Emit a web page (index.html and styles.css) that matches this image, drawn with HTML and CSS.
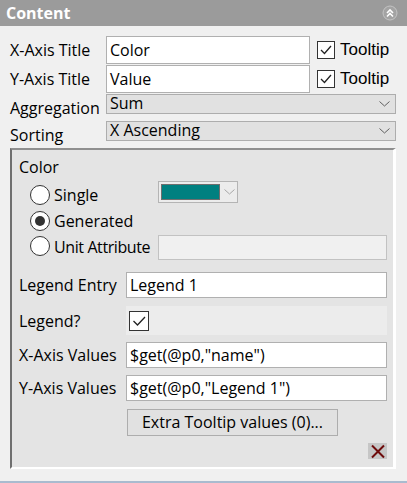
FILE: index.html
```html
<!DOCTYPE html>
<html>
<head>
<meta charset="utf-8">
<link rel="stylesheet" href="styles.css">
</head>
<body>
<div class="panel">
  <div class="header">
    <span class="title">Content</span>
    <svg class="collapse" width="16" height="16" viewBox="0 0 16 16">
      <circle cx="8" cy="8" r="7" fill="#a3a3a3" stroke="#c4c4c4" stroke-width="1"/>
      <polyline points="5,8 8,5 11,8" fill="none" stroke="#fff" stroke-width="1.6"/>
      <polyline points="5,11.5 8,8.5 11,11.5" fill="none" stroke="#fff" stroke-width="1.6"/>
    </svg>
  </div>
  <div class="content">
    <div class="row r1">
      <span class="lbl">X-Axis Title</span>
      <div class="input short">Color</div>
      <div class="chk-wrap">
        <span class="chk"><svg width="16" height="16" viewBox="0 0 16 16"><polyline points="3,8 6.5,11.5 13,4" fill="none" stroke="#222" stroke-width="1.3"/></svg></span>
        <span class="chk-lbl">Tooltip</span>
      </div>
    </div>
    <div class="row r2">
      <span class="lbl">Y-Axis Title</span>
      <div class="input short">Value</div>
      <div class="chk-wrap">
        <span class="chk"><svg width="16" height="16" viewBox="0 0 16 16"><polyline points="3,8 6.5,11.5 13,4" fill="none" stroke="#222" stroke-width="1.3"/></svg></span>
        <span class="chk-lbl">Tooltip</span>
      </div>
    </div>
    <div class="row sel-row r3">
      <span class="lbl low">Aggregation</span>
      <div class="select"><span class="sel-text">Sum</span>
        <svg class="chev" width="11" height="6" viewBox="0 0 11 6"><polyline points="0.5,0.5 5.5,5 10.5,0.5" fill="none" stroke="#606060" stroke-width="1"/></svg>
      </div>
    </div>
    <div class="row sel-row r4">
      <span class="lbl low">Sorting</span>
      <div class="select"><span class="sel-text">X Ascending</span>
        <svg class="chev" width="11" height="6" viewBox="0 0 11 6"><polyline points="0.5,0.5 5.5,5 10.5,0.5" fill="none" stroke="#606060" stroke-width="1"/></svg>
      </div>
    </div>

    <div class="group">
      <div class="grp-title">Color</div>
      <div class="radio-row rr1">
        <div class="radio-opt"><span class="radio"></span><span class="radio-lbl">Single</span></div>
        <div class="combo">
          <span class="swatch"></span>
          <svg class="combo-chev" width="11" height="6" viewBox="0 0 11 6"><polyline points="0.5,0.5 5.5,5 10.5,0.5" fill="none" stroke="#a8a8a8" stroke-width="1"/></svg>
        </div>
      </div>
      <div class="radio-row rr2">
        <div class="radio-opt"><span class="radio on"><span class="dot"></span></span><span class="radio-lbl">Generated</span></div>
      </div>
      <div class="radio-row rr3">
        <div class="radio-opt"><span class="radio up"></span><span class="radio-lbl tight">Unit Attribute</span></div>
        <div class="input disabled wide"></div>
      </div>

      <div class="frow f1">
        <span class="flbl">Legend Entry</span>
        <div class="input field">Legend 1</div>
      </div>
      <div class="frow f2">
        <span class="flbl">Legend?</span>
        <div class="legend-box">
          <span class="chk big"><svg width="18" height="18" viewBox="0 0 18 18"><polyline points="3.5,9 7.5,13 15,5" fill="none" stroke="#222" stroke-width="1.3"/></svg></span>
        </div>
      </div>
      <div class="frow f3">
        <span class="flbl">X-Axis Values</span>
        <div class="input field">$get(@p0,"name")</div>
      </div>
      <div class="frow f4">
        <span class="flbl">Y-Axis Values</span>
        <div class="input field">$get(@p0,"Legend 1")</div>
      </div>
      <div class="btn-row">
        <div class="btn">Extra Tooltip values (0)...</div>
      </div>
      <div class="del-row">
        <span class="del"><svg width="19" height="16" viewBox="0 0 19 16"><line x1="4" y1="2.5" x2="16" y2="14.5" stroke="#6e0b0b" stroke-width="2"/><line x1="16" y1="2.5" x2="4" y2="14.5" stroke="#6e0b0b" stroke-width="2"/></svg></span>
      </div>
    </div>
  </div>
</div>
</body>
</html>
```

FILE: styles.css
```css
* { box-sizing: border-box; }
html, body { margin: 0; padding: 0; }
body {
  font-family: "Open Sans", "Noto Sans", sans-serif;
  font-size: 16px;
  color: #000;
  background: #f0f0f0;
}
.panel {
  width: 407px;
  height: 483px;
  background: #f0f0f0;
  border-bottom: 2px solid #a9bbcf;
}
.header {
  height: 26px;
  background: #9b9b9b;
  display: flex;
  align-items: center;
  justify-content: space-between;
  padding: 0 10px 0 6px;
}
.title {
  color: #fff;
  font-weight: 700;
  font-size: 16px;
  line-height: 20px;
}
.collapse { margin-right: -1px; }

.content { padding-left: 10px; }
.row {
  display: flex;
  align-items: center;
}
.lbl {
  width: 96px;
  line-height: 20px;
  white-space: nowrap;
}
.r1 { margin-top: 10px; height: 28px; }
.r2 { margin-top: 1px; height: 28px; }
.r3 { margin-top: 1px; height: 20px; }
.r4 { margin-top: 7px; height: 20px; }
.lbl.low { position: relative; top: 4px; }

.input {
  background: #fff;
  border: 1px solid #b0b0b0;
  padding: 0 3px;
  line-height: 24px;
  white-space: nowrap;
  overflow: hidden;
}
.input.short { width: 204px; height: 28px; line-height: 26px; }
.chk-wrap {
  display: flex;
  align-items: center;
  margin-left: 7px;
}
.chk {
  width: 18px;
  height: 18px;
  border: 1px solid #333;
  background: #fff;
  display: flex;
  align-items: center;
  justify-content: center;
}
.chk-lbl {
  font-family: "Liberation Sans", Arial, sans-serif;
  font-size: 17px;
  margin-left: 5px;
  line-height: 20px;
}
.select {
  width: 290px;
  height: 20px;
  background: #e1e1e1;
  border: 1px solid #adadad;
  display: flex;
  justify-content: space-between;
  padding: 0 5px 0 3px;
}
.sel-text { line-height: 16px; white-space: nowrap; }
.chev { margin-top: 6px; }

.group {
  margin-top: 7px;
  width: 386px;
  height: 321px;
  background: #e4e4e4;
  border-top: 2px solid #8f8f8f;
  border-left: 2px solid #6f6f6f;
  border-right: 3px solid #fff;
  border-bottom: 2px solid #fff;
  padding: 0 6px 0 7px;
}
.grp-title {
  line-height: 20px;
  padding-top: 7px;
  height: 32px;
}
.radio-row {
  display: flex;
  align-items: center;
  height: 26px;
  padding-left: 11px;
}
.radio-opt {
  width: 128px;
  display: flex;
  align-items: center;
}
.radio {
  width: 20px;
  height: 20px;
  border-radius: 50%;
  border: 1px solid #333;
  background: #fff;
  display: flex;
  align-items: center;
  justify-content: center;
  flex: none;
}
.radio.up { margin-top: -3px; }
.dot {
  width: 10px;
  height: 10px;
  border-radius: 50%;
  background: #333;
}
.radio-lbl {
  margin-left: 4px;
  line-height: 20px;
  white-space: nowrap;
}
.radio-lbl.tight { letter-spacing: -0.4px; }
.combo {
  width: 80px;
  height: 22px;
  border: 1px solid #b4b4b4;
  background: #ececec;
  display: flex;
  align-items: center;
  padding-left: 2px;
  margin-top: -6px;
}
.swatch {
  width: 59px;
  height: 16px;
  background: #008080;
  border: 1px solid #6e6e6e;
}
.combo-chev { margin-left: 4px; }
.input.disabled {
  background: #f0f0f0;
  border-color: #c2c2c2;
}
.input.wide { width: 229px; height: 25px; }

.frow {
  display: flex;
  align-items: center;
}
.flbl {
  width: 107px;
  line-height: 20px;
  white-space: nowrap;
}
.input.field { width: 261px; height: 26px; }
.f1 { margin-top: 12px; }
.f2 { margin-top: 8px; }
.f3 { margin-top: 7px; }
.f4 { margin-top: 7px; }
.legend-box {
  width: 261px;
  height: 29px;
  background: #ececec;
  display: flex;
  align-items: center;
  padding-left: 3px;
}
.chk.big { width: 20px; height: 20px; }
.btn-row {
  margin-top: 8px;
  padding-left: 108px;
}
.btn {
  width: 211px;
  height: 27px;
  background: #e1e1e1;
  border: 1px solid #adadad;
  text-align: center;
  line-height: 25px;
  white-space: nowrap;
}
.del-row {
  margin-top: 7px;
  display: flex;
  justify-content: flex-end;
}
.del {
  width: 19px;
  height: 16px;
  background: #c6c6c6;
  display: flex;
}
```
